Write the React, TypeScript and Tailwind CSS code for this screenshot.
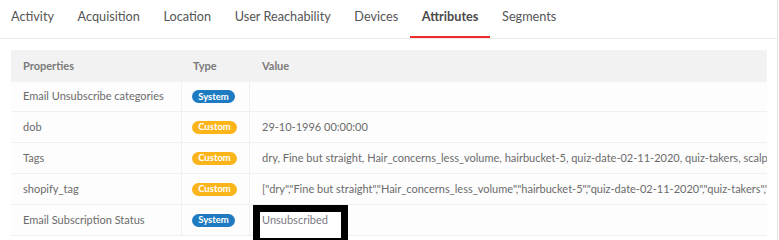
import React from "react";

const tabs = ["Activity", "Acquisition", "Location", "User Reachability", "Devices", "Attributes", "Segments"];

type Row = { name: string; type: "System" | "Custom"; value: string; boxed?: boolean };

const rows: Row[] = [
  { name: "Email Unsubscribe categories", type: "System", value: "" },
  { name: "dob", type: "Custom", value: "29-10-1996 00:00:00" },
  {
    name: "Tags",
    type: "Custom",
    value:
      "dry, Fine but straight, Hair_concerns_less_volume, hairbucket-5, quiz-date-02-11-2020, quiz-takers, scalp_issues, shopify",
  },
  {
    name: "shopify_tag",
    type: "Custom",
    value:
      '["dry","Fine but straight","Hair_concerns_less_volume","hairbucket-5","quiz-date-02-11-2020","quiz-takers","scalp_issues"]',
  },
  { name: "Email Subscription Status", type: "System", value: "Unsubscribed", boxed: true },
];

function Badge({ type }: { type: "System" | "Custom" }) {
  return (
    <span
      className={
        "inline-flex h-[13px] items-center justify-center rounded-full text-[9.5px] font-bold leading-none text-white " +
        (type === "System" ? "w-[43px] bg-[#1f7bc1]" : "w-[45px] bg-[#fbb419]")
      }
    >
      {type}
    </span>
  );
}

export default function App() {
  return (
    <div
      className="h-[240px] w-[778px] overflow-hidden border-r border-[#e6e6e6] bg-white"
      style={{ fontFamily: "Lato, 'Open Sans', sans-serif" }}
    >
      <div className="flex h-[39px] border-b border-[#ebebeb]">
        {tabs.map((t) => {
          const active = t === "Attributes";
          return (
            <div
              key={t}
              className={
                "flex h-[38px] items-center pb-[3px] pl-3 pr-[11.6px] text-[12.7px] " +
                (active
                  ? "border-b-2 border-[#ef2b2b] font-bold text-[#4a4a4a]"
                  : "border-b-2 border-transparent text-[#555]")
              }
              style={t === "Activity" ? { marginLeft: -1 } : undefined}
            >
              {t}
            </div>
          );
        })}
      </div>
      <div className="ml-[11px] mt-[11px] w-[756px] bg-[#fdfdfd] text-[11px] text-[#6b6b6b]">
        <div className="grid h-[32px] grid-cols-[171px_68px_517px] items-center bg-[#f2f2f2] font-bold text-[#7a7a7a]">
          <div className="pl-3">Properties</div>
          <div className="pl-[11px]">Type</div>
          <div className="pl-3">Value</div>
        </div>
        {rows.map((r, i) => (
          <div
            key={i}
            className={
              "grid grid-cols-[171px_68px_517px] border-b border-[#f0f0f0] " +
              (i === 0 ? "h-[30px]" : "h-[31px]")
            }
          >
            <div className="flex items-center overflow-hidden whitespace-nowrap border-r border-[#f0f0f0] pl-3">
              {r.name}
            </div>
            <div className="flex items-center border-r border-[#f0f0f0] pl-[10px]">
              <Badge type={r.type} />
            </div>
            <div className="relative flex min-w-0 items-center whitespace-nowrap pl-3">
              {r.boxed ? (
                <>
                  <div className="absolute left-[3px] top-0 h-[40px] w-[95px] border-[7px] border-black bg-white" />
                  <span className="relative text-[#7a7a84]">{r.value}</span>
                </>
              ) : (
                <span className="block overflow-hidden">{r.value}</span>
              )}
            </div>
          </div>
        ))}
      </div>
    </div>
  );
}
